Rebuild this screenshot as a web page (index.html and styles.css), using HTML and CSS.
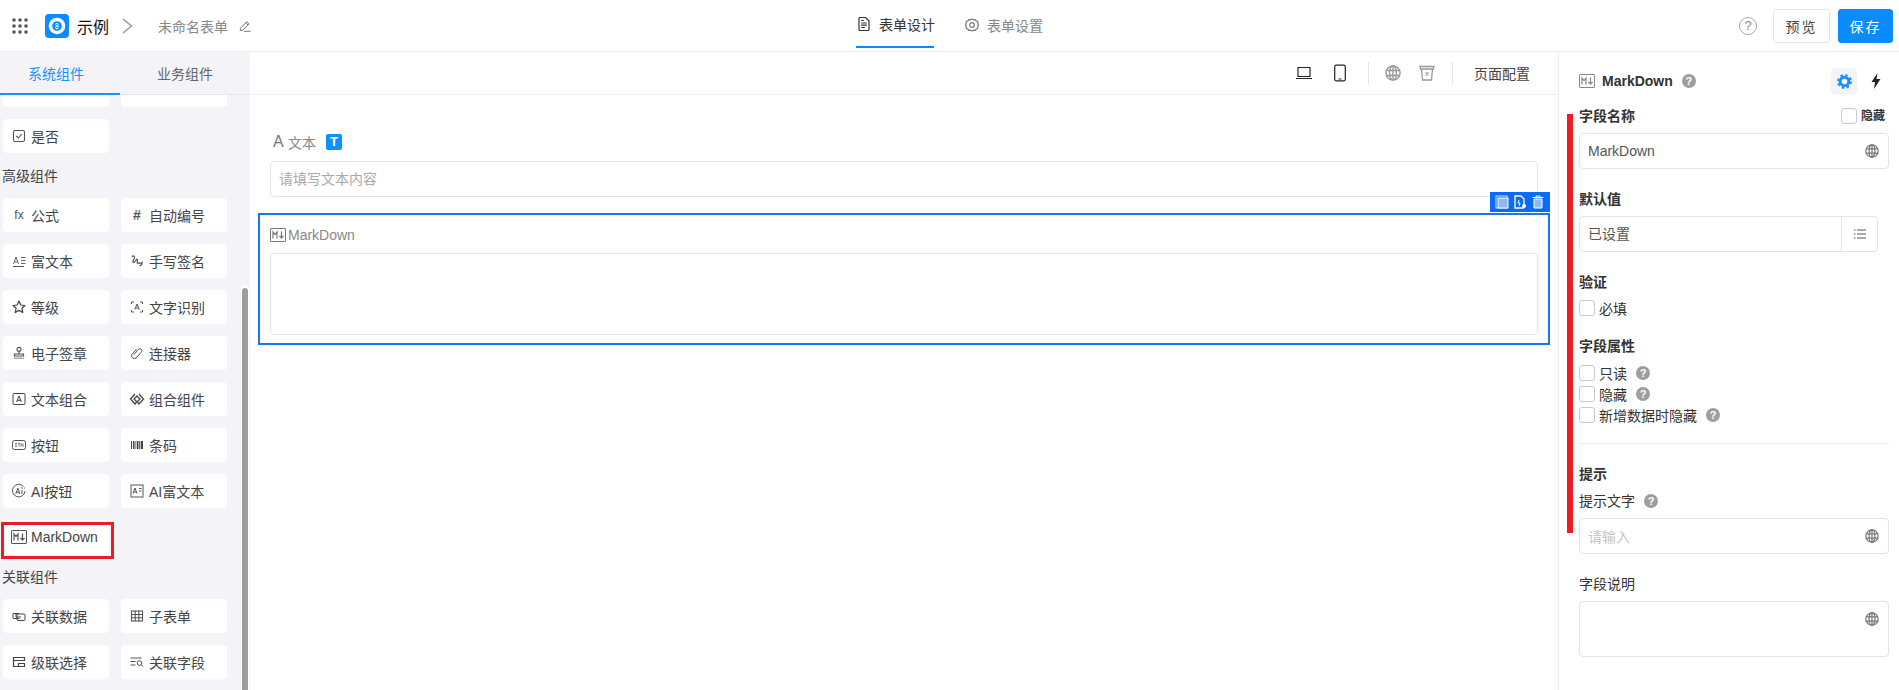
FILE: index.html
```html
<!DOCTYPE html>
<html lang="zh">
<head>
<meta charset="utf-8">
<title>表单设计</title>
<link rel="stylesheet" href="styles.css">
</head>
<body>
<svg class="defs" xmlns="http://www.w3.org/2000/svg">
  <symbol id="globe" viewBox="0 0 14 14"><g fill="none" stroke="currentColor" stroke-width="1.2"><circle cx="7" cy="7" r="6.2"/><ellipse cx="7" cy="7" rx="3" ry="6.2"/><path d="M.8 4.800h12.400M.8 9.200h12.400M7 .8v12.400"/></g></symbol>
  <symbol id="md" viewBox="0 0 16 14"><g fill="none" stroke="currentColor"><rect x=".5" y=".5" width="15" height="13" rx=".5" stroke-width="1"/><path d="M3 10.500V4l2 2.500L7 4v6.500M11.500 3.500v6.500M9.500 7.800l2 2.300 2-2.300" stroke-width="1.200"/></g></symbol>
</svg>

<header class="topbar">
  <div class="brand">
    <svg class="dots" viewBox="0 0 16 16"><g fill="#555"><circle cx="2" cy="2" r="1.800"/><circle cx="8" cy="2" r="1.800"/><circle cx="14" cy="2" r="1.800"/><circle cx="2" cy="8" r="1.800"/><circle cx="8" cy="8" r="1.800"/><circle cx="14" cy="8" r="1.800"/><circle cx="2" cy="14" r="1.800"/><circle cx="8" cy="14" r="1.800"/><circle cx="14" cy="14" r="1.800"/></g></svg>
    <svg class="logo" viewBox="0 0 24 24"><rect width="24" height="24" rx="4" fill="#0a8cff"/><circle cx="12" cy="12" r="8.300" fill="#fff"/><circle cx="12" cy="12" r="4.800" fill="#0a8cff"/><circle cx="12" cy="10.600" r="1.300" fill="none" stroke="#fff" stroke-width=".9"/><circle cx="12" cy="13.400" r="1.400" fill="none" stroke="#fff" stroke-width=".9"/></svg>
    <span class="app-name">示例</span>
    <svg class="chev" viewBox="0 0 11 16"><path d="M1 1l8.500 7L1 15" fill="none" stroke="#999" stroke-width="1.500"/></svg>
    <span class="form-name">未命名表单</span>
    <svg class="pencil" viewBox="0 0 12 12"><path d="M1.500 8.200L7.800 1.600l2.300 2.200-6.300 6.400-2.600.3zM6.800 2.800l2.200 2.200M5 11.300h6.500" fill="none" stroke="#777" stroke-width="1"/></svg>
  </div>
  <nav class="main-tabs">
    <div class="main-tab main-tab-on">
      <svg class="mt-icon" viewBox="0 0 12 14"><path d="M1 1.500a1 1 0 0 1 1-1h5.500l3.500 3.500v8.500a1 1 0 0 1-1 1H2a1 1 0 0 1-1-1zM3.200 6h5.600M3.200 8.200h5.600M3.200 10.500h3.600M3.200 3.500h2.600" fill="none" stroke="#333" stroke-width="1.200"/></svg>
      <span>表单设计</span>
    </div>
    <div class="main-tab main-tab-off">
      <svg class="mt-icon mt-gear" viewBox="0 0 14 14"><circle cx="7" cy="7" r="2.300" fill="none" stroke="#777" stroke-width="1.200"/><path d="M7 .9l1.600.9 1.800-.2 1 1.500 1.600.9-.2 1.800.7 1.200-.7 1.200.2 1.800-1.600.9-1 1.500-1.800-.2L7 13.100l-1.600-.9-1.800.2-1-1.500-1.600-.9.2-1.800L.5 7l.7-1.200-.2-1.800 1.600-.9 1-1.500 1.800.2z" fill="none" stroke="#777" stroke-width="1.200" stroke-linejoin="round"/></svg>
      <span>表单设置</span>
    </div>
  </nav>
  <div class="actions">
    <span class="help-outline">?</span>
    <button class="btn btn-plain">预览</button>
    <button class="btn btn-primary">保存</button>
  </div>
</header>

<main class="workspace">
  <aside class="sidebar">
    <div class="side-tabs">
      <div class="side-tab side-tab-on">系统组件</div>
      <div class="side-tab side-tab-off">业务组件</div>
    </div>
    <div class="palette">
      <div class="card-stub"></div><div class="card-stub"></div>

      <div class="card"><svg class="ci" viewBox="0 0 16 16"><rect x="2.500" y="2.500" width="11" height="11" rx="1.500" fill="none" stroke="#555" stroke-width="1.100"/><path d="M5.300 8l2 2 3.500-3.800" fill="none" stroke="#555" stroke-width="1.100"/></svg><span>是否</span></div>

      <div class="group">高级组件</div>

      <div class="card"><span class="ci ci-text">fx</span><span>公式</span></div>
      <div class="card"><span class="ci ci-hash">#</span><span>自动编号</span></div>

      <div class="card"><svg class="ci" viewBox="0 0 16 16"><g fill="none" stroke="#555"><path d="M2 13.500h11" stroke-width="1"/><path d="M2.500 11l2.500-7 2.500 7M3.500 9h3M10 4.500h4.500M10 7.500h4.500M10 10.500h4.500" stroke-width=".9"/></g></svg><span>富文本</span></div>
      <div class="card"><svg class="ci" viewBox="0 0 16 16"><path d="M3 4c1-2 3-1 2.500 1L4 8c-.5 1.500 1 2 2 .5L7.500 6.500c.6-.8 1.300 0 1 1L8.200 9.500c-.2 1 1 1 1.800.2.500.8 2 .8 3-.2 0 1.500-.5 3-2.500 3.500" fill="none" stroke="#555" stroke-width="1.200"/></svg><span>手写签名</span></div>

      <div class="card"><svg class="ci" viewBox="0 0 16 16"><path d="M8 2l1.800 4 4.200.5-3.100 2.800.9 4.200L8 11.400 4.200 13.500l.9-4.200L2 6.500 6.200 6z" fill="none" stroke="#444" stroke-width="1.200" stroke-linejoin="round"/></svg><span>等级</span></div>
      <div class="card"><svg class="ci" viewBox="0 0 16 16"><g fill="none" stroke="#555" stroke-width="1"><path d="M2.500 5V3h2.500M11 3h2.500v2M13.500 11v2H11M5 13H2.500v-2"/><path d="M5.700 10.800L8 5l2.300 5.800M6.500 9h3"/></g></svg><span>文字识别</span></div>

      <div class="card"><svg class="ci" viewBox="0 0 16 16"><g fill="none" stroke="#555" stroke-width="1.200"><circle cx="8" cy="4.300" r="2"/><path d="M8 6.300v2.500M3.500 11V9h9v2z"/></g><rect x="3" y="12.500" width="10" height="1.500" fill="#aaa"/></svg><span>电子签章</span></div>
      <div class="card"><svg class="ci" viewBox="0 0 16 16"><path d="M5 9.500l4.500-5.200a2 2 0 0 1 3 2.600L7 13a2.700 2.700 0 0 1-4-3.500L7.500 4.200" fill="none" stroke="#555" stroke-width="1"/></svg><span>连接器</span></div>

      <div class="card"><svg class="ci" viewBox="0 0 16 16"><g fill="none" stroke="#444" stroke-width="1"><rect x="2" y="2.500" width="12" height="11" rx="1"/><path d="M5.500 11L8 5l2.500 6M6.300 9.300h3.400"/></g></svg><span>文本组合</span></div>
      <div class="card"><svg class="ci ci-wide" viewBox="0 0 16 16"><g fill="none" stroke="#444" stroke-width="1.300"><path d="M6 3L1.500 8 6 13l1.500-1.700M10 3l4.500 5L10 13 8.500 11.300"/><path d="M8 5l3 3-3 3-3-3z"/></g></svg><span>组合组件</span></div>

      <div class="card"><svg class="ci" viewBox="0 0 16 16"><rect x="1.500" y="3.500" width="13" height="9" rx="2" fill="none" stroke="#555" stroke-width="1"/><path d="M4 6.500h2M4 8h2M4 9.500h2M7 6.500h2M8 6.500v3M10 9.500v-3l2 3v-3" fill="none" stroke="#555" stroke-width=".7"/></svg><span>按钮</span></div>
      <div class="card"><svg class="ci" viewBox="0 0 16 16"><path d="M2 4h1v8H2zM4 4h1.500v8H4zM6.500 4h.8v8h-.8zM8 4h1.500v8H8zM10.200 4h.8v8h-.8zM11.700 4H14v8h-2.300z" fill="#444"/></svg><span>条码</span></div>

      <div class="card"><svg class="ci" viewBox="0 0 16 16"><g fill="none" stroke="#555" stroke-width="1"><path d="M12.500 3.500A6.300 6.300 0 1 0 14 8"/><path d="M4.800 11l2-6 2 6M5.500 9.200h2.700M11 7v4"/></g><circle cx="11" cy="5" r=".8" fill="#555"/><circle cx="13.600" cy="5" r=".6" fill="#555"/></svg><span>AI按钮</span></div>
      <div class="card"><svg class="ci" viewBox="0 0 16 16"><g fill="none" stroke="#555" stroke-width="1"><rect x="2" y="2" width="12" height="12"/><path d="M4 10.500L6 5l2 5.500M4.700 9h2.600M10 5.500h2.500M10 8h2.500"/></g></svg><span>AI富文本</span></div>

      <div class="card card-marked"><svg class="ci ci-md"><use href="#md"/></svg><span>MarkDown</span><i class="mark-box"></i></div>
      <div class="grid-blank"></div>

      <div class="group">关联组件</div>

      <div class="card"><svg class="ci" viewBox="0 0 16 16"><g fill="none" stroke="#444" stroke-width="1"><path d="M8.500 10.500H3a1 1 0 0 1-1-1V5.500h6"/><rect x="6" y="6" width="8" height="6.500" rx="1"/><path d="M5 5.500V9h5"/></g></svg><span>关联数据</span></div>
      <div class="card"><svg class="ci" viewBox="0 0 16 16"><g fill="none" stroke="#555" stroke-width="1.100"><rect x="2.500" y="3" width="11" height="10"/><path d="M2.500 6.500h11M2.500 9.800h11M6.200 3v10M9.800 3v10"/></g></svg><span>子表单</span></div>

      <div class="card"><svg class="ci" viewBox="0 0 16 16"><g fill="none" stroke="#444" stroke-width="1.200"><path d="M2.500 3.500h11v3h-11zM2.500 6.500v6h5M7.500 9.500h6v3h-6z"/></g></svg><span>级联选择</span></div>
      <div class="card"><svg class="ci" viewBox="0 0 16 16"><g fill="none" stroke="#555" stroke-width="1"><path d="M1.500 4h11M1.500 7.500h5M1.500 11h5"/><circle cx="10.500" cy="9" r="2.300"/><path d="M12.200 10.700l1.800 1.800"/></g></svg><span>关联字段</span></div>
    </div>
    <div class="scroll-thumb"></div>
  </aside>

  <section class="canvas">
    <div class="canvas-bar">
      <svg class="tool" viewBox="0 0 18 16"><path d="M3 2.500h12v9H3zM1 13.500h16" fill="none" stroke="#222" stroke-width="1.200"/></svg>
      <svg class="tool tool-phone" viewBox="0 0 12 18"><rect x=".7" y="1.200" width="10.600" height="15.600" rx="1.500" fill="none" stroke="#222" stroke-width="1.200"/><path d="M4.500 15h3" stroke="#222"/></svg>
      <i class="bar-sep bar-sep-a"></i>
      <svg class="tool tool-globe"><use href="#globe"/></svg>
      <svg class="tool tool-bin" viewBox="0 0 16 16"><path d="M1 1.500h14l-.5 2.500H1.500zM2.500 4l1 11h9l1-11M6.500 7.500l3 3M9.500 7.500l-3 3" fill="none" stroke="#999" stroke-width="1.300"/></svg>
      <i class="bar-sep bar-sep-b"></i>
      <span class="page-cfg">页面配置</span>
    </div>
    <div class="canvas-body">
      <div class="form-item">
        <div class="item-label">
          <span class="label-a">A</span><span>文本</span>
          <span class="t-badge">T</span>
        </div>
        <div class="fake-input">请填写文本内容</div>
      </div>
      <div class="form-item-selected">
        <div class="sel-tools">
          <svg class="sel-icon" viewBox="0 0 14 14"><rect x="1" y="1" width="11" height="12" fill="none" stroke="#cfe0ff"/><rect x="3" y="3" width="10" height="10" fill="#8fb8fb" stroke="#fff"/></svg>
          <svg class="sel-icon" viewBox="0 0 14 14"><path d="M2 1h6l3 3v8a1 1 0 0 1-1 1H2z" fill="none" stroke="#fff" stroke-width="1.300"/><path d="M6 5l-1 3h2l-1 3" fill="none" stroke="#fff"/><circle cx="11" cy="11" r="2" fill="#fff"/></svg>
          <svg class="sel-icon" viewBox="0 0 14 14"><path d="M1.500 2.500h11M5 2.500V1h4v1.500" fill="none" stroke="#fff"/><path d="M3 4h8v9H3z" fill="#8fb8fb" stroke="#fff"/></svg>
        </div>
        <div class="item-label item-label-md">
          <svg class="md-icon"><use href="#md"/></svg><span>MarkDown</span>
        </div>
        <div class="fake-area"></div>
      </div>
    </div>
  </section>

  <aside class="panel">
    <i class="red-bar"></i>
    <div class="panel-head">
      <svg class="md-icon md-head"><use href="#md"/></svg>
      <strong class="panel-title">MarkDown</strong>
      <span class="help help-head">?</span>
      <span class="gear-btn"><svg class="gear" viewBox="0 0 16 16"><circle cx="8" cy="8" r="4.600" fill="none" stroke="#1890ff" stroke-width="3.200"/><circle cx="8" cy="8" r="6.800" fill="none" stroke="#1890ff" stroke-width="2.200" stroke-dasharray="2.670 2.670"/></svg></span>
      <svg class="bolt" viewBox="0 0 10 16"><path d="M6.500 0L.5 9h3.500l-1 7 6.500-10H5.500z" fill="#222"/></svg>
    </div>

    <div class="lbl lbl-name">
      <b>字段名称</b>
      <label class="hide-check"><i class="cb"></i><b class="small-b">隐藏</b></label>
    </div>
    <div class="box ctl"><span>MarkDown</span><svg class="g-icon"><use href="#globe"/></svg></div>

    <div class="lbl sec"><b>默认值</b></div>
    <div class="box box-split ctl"><span class="split-text">已设置</span><span class="split-btn"><svg class="list-icon" viewBox="0 0 14 14"><path d="M4 3h9M4 7h9M4 11h9M1 3h1.500M1 7h1.500M1 11h1.500" fill="none" stroke="#555"/></svg></span></div>

    <div class="lbl sec"><b>验证</b></div>
    <div class="chk chk-first"><i class="cb"></i><span>必填</span></div>

    <div class="lbl sec"><b>字段属性</b></div>
    <div class="chk chk-attr"><i class="cb"></i><span>只读</span><span class="help">?</span></div>
    <div class="chk chk-next"><i class="cb"></i><span>隐藏</span><span class="help">?</span></div>
    <div class="chk chk-next"><i class="cb"></i><span>新增数据时隐藏</span><span class="help">?</span></div>

    <hr class="rule">

    <div class="lbl lbl-tip"><b>提示</b></div>
    <div class="lbl ctl"><span>提示文字</span><span class="help">?</span></div>
    <div class="box ctl"><span class="ph">请输入</span><svg class="g-icon"><use href="#globe"/></svg></div>

    <div class="lbl sec"><span>字段说明</span></div>
    <div class="box box-area ctl"><svg class="g-icon"><use href="#globe"/></svg></div>
  </aside>
</main>
</body>
</html>
```
FILE: styles.css
```css
* { box-sizing: border-box; }
html, body { margin: 0; height: 690px; overflow: hidden; background: #fff; }
body { font-family: "Liberation Sans", "Noto Sans CJK SC", sans-serif; font-size: 14px; color: #333; width: 1899px; }
.defs { display: none; }
i { display: block; font-style: normal; }

/* top bar */
.topbar { height: 52px; border-bottom: 1px solid #eee; display: flex; align-items: center; }
.brand { width: 856px; flex: none; display: flex; align-items: center; padding-left: 12px; }
.dots { width: 16px; height: 16px; flex: none; }
.logo { width: 24px; height: 24px; margin-left: 17px; flex: none; }
.app-name { font-size: 16px; color: #111; margin-left: 8px; }
.chev { width: 11px; height: 16px; margin-left: 13px; }
.form-name { color: #888; margin-left: 25px; }
.pencil { width: 12px; height: 12px; margin-left: 11px; }

.main-tabs { display: flex; height: 51px; }
.main-tab { display: flex; align-items: center; height: 48px; padding-top: 1px; white-space: nowrap; }
.main-tab-on { width: 78px; border-bottom: 2px solid #0a8cff; color: #333; padding-left: 2px; }
.main-tab-off { margin-left: 31px; color: #888; }
.mt-icon { width: 12px; height: 14px; margin-right: 9px; flex: none; }
.mt-gear { width: 14px; margin-right: 8px; }

.actions { margin-left: auto; display: flex; align-items: center; padding-right: 6px; }
.help-outline { width: 18px; height: 18px; border: 1.500px solid #aaa; border-radius: 50%; color: #888; font-size: 13px; line-height: 15px; text-align: center; margin-right: 16px; }
.btn { height: 34px; font: inherit; border-radius: 3px; letter-spacing: 2px; padding: 0; }
.btn-plain { width: 57px; background: #fff; border: 1px solid #e4e4e4; color: #444; }
.btn-primary { width: 55px; margin-left: 8px; background: #0a8cff; border: 1px solid #0a8cff; color: #fff; }

.workspace { display: flex; height: 638px; }

/* sidebar */
.sidebar { width: 250px; flex: none; background: #f3f3f8; position: relative; overflow: hidden; }
.side-tabs { display: flex; height: 43px; border-bottom: 1px solid #e4e4ea; }
.side-tab { width: 120px; height: 43px; line-height: 45px; }
.side-tab-on { padding-left: 28px; color: #1890ff; border-bottom: 2px solid #1890ff; }
.side-tab-off { padding-left: 37px; color: #666; }
.palette { display: grid; grid-template-columns: 106px 106px; gap: 12px; padding-left: 3px; }
.card-stub { height: 12px; background: #fff; border-radius: 0 0 4px 4px; }
.card { height: 34px; background: #fff; border-radius: 4px; display: flex; align-items: center; padding-left: 8px; color: #444; position: relative; white-space: nowrap; }
.ci { width: 16px; height: 16px; margin-right: 4px; flex: none; }
.ci-wide { width: 18px; margin-left: -1px; margin-right: 3px; }
.ci-text { font-size: 12px; line-height: 16px; text-align: center; color: #555; }
.ci-hash { font-size: 14px; line-height: 16px; text-align: center; color: #555; font-weight: bold; }
.ci-md { color: #555; }
.group { grid-column: 1 / -1; height: 21px; line-height: 23px; margin-left: -1px; color: #444; }
.grid-blank { height: 34px; }
.mark-box { position: absolute; left: -2px; top: 2px; width: 113px; height: 37px; border: 3px solid #e81c2a; pointer-events: none; }
.scroll-thumb { position: absolute; left: 242px; top: 236px; width: 6px; height: 402px; background: #9e9e9e; border-radius: 3px 3px 0 0; box-shadow: 0 -1px 0 1px #fff; }

/* canvas */
.canvas { flex: 1; min-width: 0; }
.canvas-bar { height: 43px; border-bottom: 1px solid #eee; display: flex; align-items: center; padding-right: 28px; justify-content: flex-end; }
.tool { width: 18px; height: 16px; flex: none; }
.tool-phone { width: 12px; height: 18px; margin-left: 21px; }
.bar-sep { width: 1px; height: 22px; background: #e4e4e8; }
.bar-sep-a { margin-left: 22px; }
.tool-globe { width: 16px; height: 16px; margin-left: 16px; color: #999; }
.tool-bin { width: 16px; height: 16px; margin-left: 18px; }
.bar-sep-b { margin-left: 17px; }
.page-cfg { margin-left: 21px; color: #444; }
.canvas-body { padding: 37px 8px 0 8px; }
.form-item { margin: 0 12px 16px; }
.item-label { height: 20px; display: flex; align-items: center; color: #888; }
.label-a { font-size: 16px; width: 18px; padding-left: 3px; color: #777; }
.t-badge { width: 16px; height: 16px; background: #1090ff; color: #fff; border-radius: 2px; margin-left: 10px; font-size: 13px; line-height: 16px; font-weight: bold; text-align: center; }
.fake-input { margin-top: 9px; height: 36px; border: 1px solid #e4e4e4; border-radius: 4px; padding-left: 8px; line-height: 34px; color: #aaa; }
.form-item-selected { border: 2px solid #1a73fa; padding: 10px 10px 8px; position: relative; }
.sel-tools { position: absolute; right: -2px; top: -23px; width: 60px; height: 20px; background: #0a6cf5; display: flex; align-items: center; justify-content: space-around; padding: 0 3px; }
.sel-icon { width: 14px; height: 14px; }
.item-label-md { gap: 2px; }
.md-icon { width: 16px; height: 14px; color: #777; flex: none; }
.fake-area { margin-top: 8px; height: 82px; border: 1px solid #e4e4e4; border-radius: 4px; }

/* right panel */
.panel { width: 341px; flex: none; border-left: 1px solid #eee; padding: 16px 10px 0 20px; position: relative; color: #333; }
.red-bar { position: absolute; left: 8px; top: 62px; width: 6px; height: 419px; background: #ed1c24; }
.panel-head { height: 26px; display: flex; align-items: center; }
.md-head { color: #888; }
.panel-title { margin-left: 7px; color: #333; }
.help { width: 14px; height: 14px; border-radius: 50%; background: #9e9e9e; color: #fff; font-size: 11px; font-weight: bold; line-height: 14px; text-align: center; margin-left: 9px; flex: none; }
.gear-btn { width: 26px; height: 26px; margin-left: auto; background: #f3f3f8; border-radius: 4px; display: flex; align-items: center; justify-content: center; }
.help-head { margin-left: 9px; }
.gear { width: 15px; height: 15px; }
.bolt { width: 10px; height: 16px; margin: 0 8px 0 14px; }

.lbl { height: 20px; line-height: 20px; display: flex; align-items: center; }
.lbl-name { margin-top: 12px; justify-content: space-between; padding-right: 4px; }
.lbl-tip { margin-top: 20px; }
.sec { margin-top: 20px; }
.ctl { margin-top: 7px; }
.hide-check { display: flex; align-items: center; gap: 4px; }
.small-b { font-size: 12px; }
.cb { width: 16px; height: 16px; border: 1px solid #c9c9d2; border-radius: 3px; background: #fff; flex: none; }

.box { height: 36px; border: 1px solid #e4e4e4; border-radius: 4px; display: flex; align-items: center; padding-left: 8px; position: relative; color: #555; }
.g-icon { width: 14px; height: 14px; color: #777; position: absolute; right: 9px; top: 10px; }
.box-split { width: 299px; padding: 0; }
.split-text { flex: 1; padding-left: 8px; padding-bottom: 2px; }
.split-btn { width: 36px; height: 34px; border-left: 1px solid #e4e4e4; display: flex; align-items: center; justify-content: center; }
.list-icon { width: 14px; height: 14px; }
.box-area { height: 56px; }
.box-area .g-icon { top: 10px; }
.ph { color: #c4c4c4; }

.chk { height: 16px; display: flex; align-items: center; gap: 4px; }
.chk-first { margin-top: 8px; }
.chk-attr { margin-top: 9px; }
.chk-next { margin-top: 5px; }
.chk .help { margin-left: 5px; }
.rule { border: 0; height: 1px; background: #eee; margin: 20px 0 0; }
```
